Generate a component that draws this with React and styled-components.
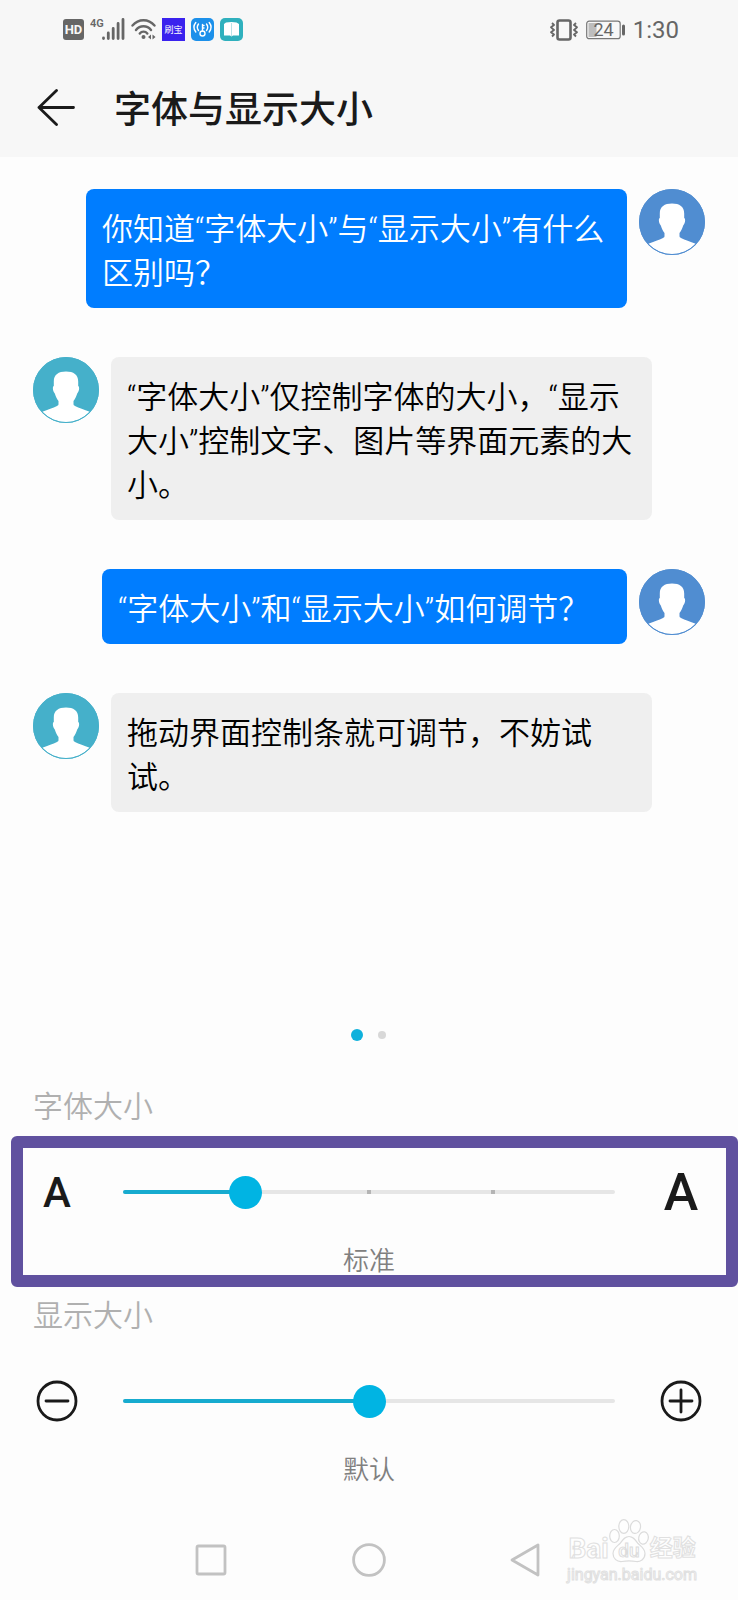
import React, { useState } from "react";
import styled, { createGlobalStyle } from "styled-components";

const GlobalStyle = createGlobalStyle`
  *, *::before, *::after { box-sizing: border-box; }
  body {
    margin: 0;
    background: #fdfdfd;
    font-family: Roboto, "Noto Sans CJK SC", sans-serif;
    color: #1a1a1a;
  }
  svg { display: block; flex: none; }
`;

const Screen = styled.div`
  display: flex;
  flex-direction: column;
  min-height: 100vh;
  position: relative;
`;

const Header = styled.header`
  background: #f7f7f7;
`;

const StatusBar = styled.div`
  display: flex;
  align-items: center;
  justify-content: space-between;
  height: 59px;
  padding: 0 59px 0 63px;
  color: #666;
`;

const StatusGroup = styled.div`
  display: flex;
  align-items: center;
  gap: ${(p) => p.$gap}px;
`;

const AppBadge = styled.span`
  display: flex;
  align-items: center;
  justify-content: center;
  width: 23px;
  height: 23px;
  background: #3a22ee;
  color: #fff;
  font-size: 9px;
  line-height: 12px;
`;

const Clock = styled.time`
  font-size: 24px;
  line-height: 28px;
`;

const TitleBar = styled.div`
  display: flex;
  align-items: center;
  gap: 38px;
  height: 98px;
  padding: 0 36px;
`;

const IconButton = styled.button`
  display: flex;
  align-items: center;
  justify-content: center;
  padding: 0;
  border: 0;
  background: none;
  color: inherit;
  font-family: inherit;
  cursor: pointer;
`;

const Title = styled.h1`
  margin: 0;
  padding-top: 6px;
  font-size: 37px;
  line-height: 48px;
  font-weight: 500;
`;

const Chat = styled.main`
  display: flex;
  flex-direction: column;
  flex: 1;
  gap: 49px;
  padding-top: 32px;
`;

const Message = styled.div`
  display: flex;
  flex-direction: ${(p) => (p.$mine ? "row-reverse" : "row")};
  align-items: flex-start;
  gap: 12px;
  padding: ${(p) => (p.$mine ? "0 33px 0 86px" : "0 86px 0 33px")};
`;

const Bubble = styled.p`
  flex: 1;
  margin: 0 0 0 ${(p) => (p.$short ? 16 : 0)}px;
  padding: 19px 14px 12px 16px;
  border-radius: 8px;
  font-size: 31px;
  line-height: 44px;
  font-weight: 350;
  background: ${(p) => (p.$mine ? "#007dff" : "#efefef")};
  color: ${(p) => (p.$mine ? "#fff" : "#000")};
`;

const Pager = styled.div`
  display: flex;
  align-items: center;
  justify-content: center;
  gap: 15px;
  height: 12px;
  padding-right: 2px;
  margin-bottom: 46px;
`;

const Dot = styled.span`
  width: ${(p) => (p.$active ? 12 : 8)}px;
  height: ${(p) => (p.$active ? 12 : 8)}px;
  border-radius: 50%;
  background: ${(p) => (p.$active ? "#0fb1dc" : "#d8d8d8")};
`;

const Settings = styled.section`
  display: flex;
  flex-direction: column;
  gap: 21px;
  padding-bottom: 36px;
`;

const Setting = styled.div`
  position: relative;
  padding: 0 33px;
`;

const SettingLabel = styled.label`
  display: block;
  margin-bottom: 40px;
  font-size: 30px;
  line-height: 40px;
  font-weight: 350;
  color: #b0b0b0;
`;

const SliderRow = styled.div`
  display: grid;
  grid-template-columns: 48px 1fr 48px;
  column-gap: 25px;
  align-items: center;
  height: 50px;
`;

const Letter = styled.span`
  padding-top: 2px;
  font-size: ${(p) => (p.$large ? 52 : 42)}px;
  line-height: 48px;
  font-weight: 500;
`;

const SliderBox = styled.div`
  display: grid;
  align-items: center;
  & > * { grid-area: 1 / 1; }
`;

const Rail = styled.div`
  display: grid;
  align-items: center;
  height: 4px;
  margin: 0 17px;
  border-radius: 2px;
  background: #e6e6e6;
  & > * { grid-area: 1 / 1; }
`;

const Fill = styled.div`
  height: 4px;
  border-radius: 2px;
  background: #17abcf;
`;

const Ticks = styled.div`
  display: flex;
  justify-content: space-evenly;
`;

const Tick = styled.span`
  width: 4px;
  height: 4px;
  background: ${(p) => (p.$hidden ? "transparent" : "#b4b4b4")};
`;

const Range = styled.input`
  appearance: none;
  width: 100%;
  height: 34px;
  margin: 0;
  background: transparent;
  cursor: pointer;
  &::-webkit-slider-thumb {
    appearance: none;
    width: 33px;
    height: 33px;
    border: 0;
    border-radius: 50%;
    background: #00b4e3;
  }
`;

const Value = styled.output`
  display: block;
  margin-top: 30px;
  font-size: 26px;
  line-height: 28px;
  font-weight: 350;
  text-align: center;
  color: #808080;
`;

const Highlight = styled.div`
  position: absolute;
  inset: 49px 0 -12px 11px;
  border: 12px solid #60519f;
  border-radius: 6px;
  pointer-events: none;
`;

const NavBar = styled.nav`
  display: flex;
  align-items: center;
  justify-content: center;
  gap: 124px;
  height: 80px;
`;

const Watermark = styled.div`
  position: absolute;
  right: 41px;
  bottom: 16px;
  display: flex;
  flex-direction: column;
  align-items: center;
  gap: 3px;
  color: #fefefe;
  -webkit-text-stroke: 1px #e0e0e0;
  pointer-events: none;
`;

const WatermarkLogo = styled.div`
  display: flex;
  align-items: flex-end;
  height: 44px;
  font-weight: 700;
`;

const WatermarkText = styled.span`
  font-size: ${(p) => p.$size}px;
  line-height: ${(p) => (p.$size > 20 ? 28 : 18)}px;
`;

function Avatar({ color }) {
  return (
    <svg width="66" height="66" viewBox="0 0 66 66" aria-hidden="true">
      <circle cx="33" cy="33" r="33" fill={color} />
      <path
        fill="#fff"
        d="M33 14.500c7.500 0 12.200 3 12.200 10v4.500c1.500.500 1.200 5-1 7.500-1 3.500-2.200 5.500-3.700 7.500v3c0 1 .500 1.500 1.500 2 4 2 9 3.500 14.700 5.800A32.300 32.300 0 0 1 9.300 54.800C15 52.500 20 51 24 49c1-.500 1.500-1 1.500-2v-3c-1.500-2-2.700-4-3.700-7.500-2.200-2.500-2.500-7-1-7.500v-4.500c0-7 4.700-10 12.200-10z"
      />
      <circle cx="33" cy="33" r="32.500" fill="none" stroke={color} strokeWidth="1" />
    </svg>
  );
}

function StatusIcons() {
  return (
    <StatusGroup $gap={6}>
      <svg width="21" height="22" viewBox="0 0 21 22" aria-label="HD">
        <rect width="21" height="21" rx="3" fill="#666" />
        <text x="10.500" y="15" textAnchor="middle" fontSize="13" fontWeight="700" fill="#f7f7f7">HD</text>
      </svg>
      <svg width="35" height="24" viewBox="0 0 35 24" aria-label="4G">
        <text x="0" y="9" fontSize="11" fontWeight="600" fill="#666">4G</text>
        <g stroke="#666" strokeWidth="2.800" strokeLinecap="round">
          <path d="M13.500 20v.500M18.300 15v5.500M23.200 10.500v10M28.100 5.500v15M33 1.500v19" />
        </g>
      </svg>
      <svg width="25" height="24" viewBox="0 0 25 24" aria-hidden="true">
        <g fill="none" stroke="#666" strokeWidth="2.400" strokeLinecap="round">
          <path d="M1.500 7.500c6-7 16-7 22 0M5 12c4-5 11-5 15 0M8.800 15.500c2-2.500 5.500-2.500 7.500 0" />
        </g>
        <circle cx="12.500" cy="19" r="2" fill="#666" />
        <path d="M20 16.500v5l-3-2.500zM21.500 16.500v5l3-2.500z" fill="#666" />
      </svg>
      <AppBadge>刷宝</AppBadge>
      <svg width="23" height="23" viewBox="0 0 23 23" aria-hidden="true">
        <rect width="23" height="23" rx="5" fill="#1c90ea" />
        <g fill="none" stroke="#fff" strokeWidth="1.400" strokeLinecap="round">
          <path d="M7.500 6c-1.500 2-1.500 4.500 0 6.500M4.800 4.500c-2.400 3-2.400 6.500 0 9.500M15.500 6c1.500 2 1.500 4.500 0 6.500M18.200 4.500c2.400 3 2.400 6.500 0 9.500M11.500 13V6.500M11.500 7.500h1.500M11.500 10h1.500" />
          <circle cx="11.500" cy="15.500" r="2.500" />
        </g>
      </svg>
      <svg width="23" height="23" viewBox="0 0 23 23" aria-hidden="true">
        <rect width="23" height="23" rx="5" fill="#2fb0bd" />
        <path d="M4 6l2-1.500L11.500 4l5 .500 2.500 1.500v11.500h-6l-1.500 1-1.500-1H4z" fill="#fff" />
        <path d="M11.500 5v13" stroke="#b9e3e7" strokeWidth="1" />
      </svg>
    </StatusGroup>
  );
}

function StatusRight() {
  return (
    <StatusGroup $gap={8}>
      <svg width="28" height="22" viewBox="0 0 28 22" aria-hidden="true">
        <rect x="7.500" y="1.500" width="13" height="19" rx="2" fill="none" stroke="#666" strokeWidth="2.600" />
        <path
          d="M2 4l2 2-3 2.300L4 11l-3 2.300L4 15.500l-2 2M26 4l-2 2 3 2.300-3 2.700 3 2.300-3 2.200 2 2"
          fill="none"
          stroke="#666"
          strokeWidth="1.800"
          strokeLinejoin="round"
        />
      </svg>
      <svg width="39" height="20" viewBox="0 0 39 20" aria-label="24">
        <rect x=".700" y="1.200" width="33.500" height="17.500" rx="2.500" fill="none" stroke="#777" strokeWidth="1.200" />
        <rect x="2.500" y="3" width="8" height="14" fill="#bdbdbd" />
        <rect x="36" y="4.500" width="3" height="11" rx="1.500" fill="#666" />
        <text x="17.500" y="16" textAnchor="middle" fontSize="18" fill="#666">24</text>
      </svg>
      <Clock>1:30</Clock>
    </StatusGroup>
  );
}

function Zoom({ plus }) {
  return (
    <svg width="42" height="42" viewBox="0 0 42 42" fill="none" stroke="#1a1a1a" aria-hidden="true">
      <circle cx="21" cy="21" r="19" strokeWidth="2.800" />
      <path d={plus ? "M10 21h22M21 10v22" : "M10 21h22"} strokeWidth="2.800" strokeLinecap="round" />
    </svg>
  );
}

function Paw() {
  return (
    <svg width="41" height="44" viewBox="0 0 41 44" aria-hidden="true">
      <g fill="#fefefe" stroke="#dcdcdc" strokeWidth="1.200">
        <ellipse cx="5.500" cy="17" rx="4.800" ry="6.500" />
        <ellipse cx="14.800" cy="7.500" rx="5" ry="6.800" />
        <ellipse cx="26.500" cy="8" rx="5" ry="6.500" transform="rotate(10 26.500 8)" />
        <ellipse cx="34.500" cy="19" rx="4.800" ry="6.200" transform="rotate(12 34.500 19)" />
        <path d="M20 17.500c4 0 6 3 9 7 3 3 7 5 7 10 0 6-5 8.500-9 8-5-.800-9-.800-14 0-5 .600-9-3-9-8 0-5 4-7 7-10 3-4 5-7 9-7z" />
      </g>
      <text x="20" y="38" textAnchor="middle" fontSize="19" fontWeight="500" fill="#fefefe" stroke="#dcdcdc" strokeWidth="1">du</text>
    </svg>
  );
}

function Slider({ id, max, value, onChange, ticks = [] }) {
  return (
    <SliderBox>
      <Rail>
        <Ticks>
          {ticks.map((shown, i) => (
            <Tick key={i} $hidden={!shown} />
          ))}
        </Ticks>
        <Fill style={{ width: `${(value / max) * 100}%` }} />
      </Rail>
      <Range id={id} type="range" min="0" max={max} value={value} onChange={(e) => onChange(Number(e.target.value))} />
    </SliderBox>
  );
}

const MESSAGES = [
  { mine: true, text: "你知道“字体大小”与“显示大小”有什么区别吗？" },
  { mine: false, text: "“字体大小”仅控制字体的大小，“显示大小”控制文字、图片等界面元素的大小。" },
  { mine: true, short: true, text: "“字体大小”和“显示大小”如何调节？" },
  { mine: false, text: "拖动界面控制条就可调节，不妨试试。" },
];

export default function App() {
  const [fontSize, setFontSize] = useState(1);
  const [displaySize, setDisplaySize] = useState(1);

  return (
    <Screen lang="zh-CN">
      <GlobalStyle />
      <Header>
        <StatusBar>
          <StatusIcons />
          <StatusRight />
        </StatusBar>
        <TitleBar>
          <IconButton aria-label="返回">
            <svg width="40" height="38" viewBox="0 0 40 38" fill="none" stroke="#1a1a1a" strokeWidth="2.800" strokeLinecap="round" strokeLinejoin="round">
              <path d="M37.500 18.500H3M20.500 1.500L3 18.500l17.500 17" />
            </svg>
          </IconButton>
          <Title>字体与显示大小</Title>
        </TitleBar>
      </Header>

      <Chat>
        {MESSAGES.map((m) => (
          <Message key={m.text} $mine={m.mine}>
            <Avatar color={m.mine ? "#508dd1" : "#45b0ca"} />
            <Bubble $mine={m.mine} $short={m.short}>{m.text}</Bubble>
          </Message>
        ))}
      </Chat>

      <Pager>
        <Dot $active />
        <Dot />
      </Pager>

      <Settings>
        <Setting>
          <SettingLabel htmlFor="font-size">字体大小</SettingLabel>
          <SliderRow>
            <IconButton aria-label="缩小字体" onClick={() => setFontSize(Math.max(0, fontSize - 1))}>
              <Letter>A</Letter>
            </IconButton>
            <Slider id="font-size" max={4} value={fontSize} onChange={setFontSize} ticks={[false, true, true]} />
            <IconButton aria-label="放大字体" onClick={() => setFontSize(Math.min(4, fontSize + 1))}>
              <Letter $large>A</Letter>
            </IconButton>
          </SliderRow>
          <Value htmlFor="font-size">标准</Value>
          <Highlight />
        </Setting>
        <Setting>
          <SettingLabel htmlFor="display-size">显示大小</SettingLabel>
          <SliderRow>
            <IconButton aria-label="缩小显示" onClick={() => setDisplaySize(Math.max(0, displaySize - 1))}>
              <Zoom />
            </IconButton>
            <Slider id="display-size" max={2} value={displaySize} onChange={setDisplaySize} />
            <IconButton aria-label="放大显示" onClick={() => setDisplaySize(Math.min(2, displaySize + 1))}>
              <Zoom plus />
            </IconButton>
          </SliderRow>
          <Value htmlFor="display-size">默认</Value>
        </Setting>
      </Settings>

      <NavBar>
        <IconButton aria-label="最近任务">
          <svg width="34" height="34" viewBox="0 0 34 34" fill="none" stroke="#c2c2c2" strokeWidth="2.800">
            <rect x="3" y="3" width="28" height="28" rx="1.500" />
          </svg>
        </IconButton>
        <IconButton aria-label="主屏幕">
          <svg width="34" height="34" viewBox="0 0 34 34" fill="none" stroke="#c2c2c2" strokeWidth="2.800">
            <circle cx="17" cy="17" r="15.400" />
          </svg>
        </IconButton>
        <IconButton aria-label="返回上一页">
          <svg width="34" height="34" viewBox="0 0 34 34" fill="none" stroke="#c2c2c2" strokeWidth="2.800" strokeLinejoin="round">
            <path d="M28 2v30L2 17z" />
          </svg>
        </IconButton>
      </NavBar>

      <Watermark>
        <WatermarkLogo>
          <WatermarkText $size={28}>Bai</WatermarkText>
          <Paw />
          <WatermarkText $size={23}>经验</WatermarkText>
        </WatermarkLogo>
        <WatermarkText $size={16}>jingyan.baidu.com</WatermarkText>
      </Watermark>
    </Screen>
  );
}
